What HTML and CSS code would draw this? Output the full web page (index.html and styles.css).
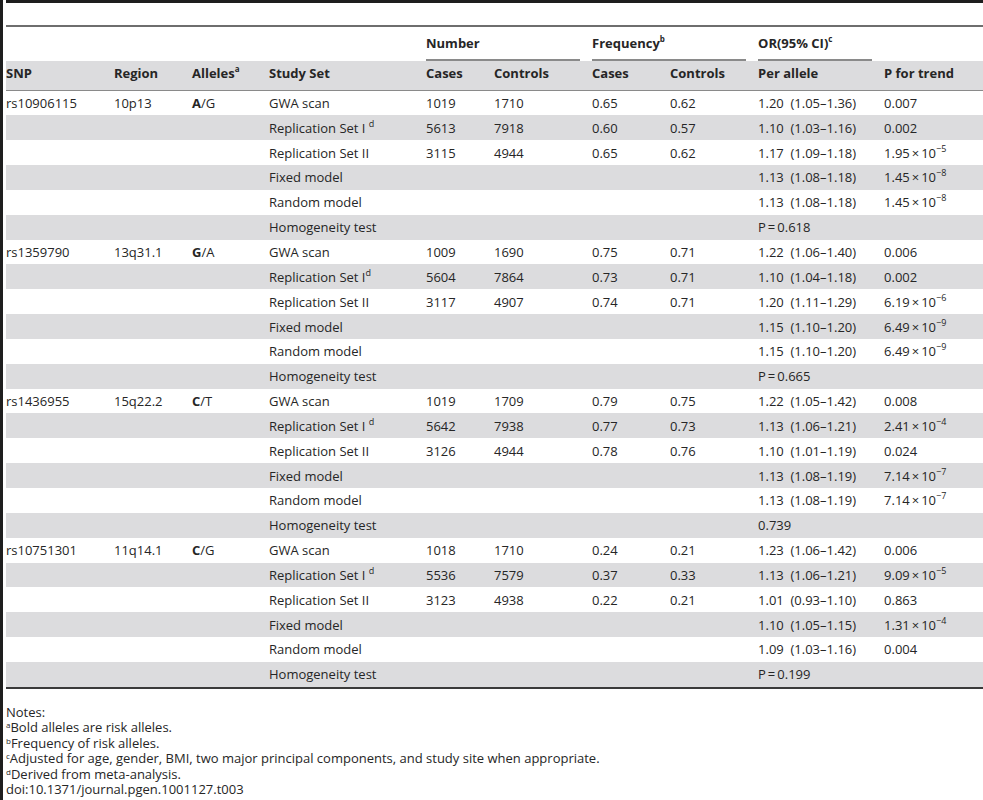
FILE: index.html
```html
<!DOCTYPE html>
<html>
<head>
<meta charset="utf-8">
<link rel="stylesheet" href="styles.css">
</head>
<body>
<div class="frame">
  <div class="topbar"></div>
  <table class="tbl">
    <colgroup>
      <col class="c1"><col class="c2"><col class="c3"><col class="c4"><col class="c5">
      <col class="c6"><col class="c7"><col class="c8"><col class="c9"><col class="c10">
    </colgroup>
    <thead>
      <tr class="group">
        <th></th><th></th><th></th><th></th>
        <th colspan="2"><div class="ul">Number</div></th>
        <th colspan="2"><div class="ul">Frequency<sup>b</sup></div></th>
        <th><div class="ul">OR(95% CI)<sup>c</sup></div></th>
        <th></th>
      </tr>
      <tr class="head">
        <th>SNP</th><th>Region</th><th>Alleles<sup>a</sup></th><th>Study Set</th>
        <th>Cases</th><th>Controls</th><th>Cases</th><th>Controls</th><th>Per allele</th><th>P for trend</th>
      </tr>
    </thead>
    <tbody>
      <tr><td>rs10906115</td><td>10p13</td><td><b>A</b>/G</td><td>GWA scan</td><td>1019</td><td>1710</td><td>0.65</td><td>0.62</td><td>1.20 &nbsp;(1.05–1.36)</td><td>0.007</td></tr>
      <tr><td></td><td></td><td></td><td>Replication Set I <sup>d</sup></td><td>5613</td><td>7918</td><td>0.60</td><td>0.57</td><td>1.10 &nbsp;(1.03–1.16)</td><td>0.002</td></tr>
      <tr><td></td><td></td><td></td><td>Replication Set II</td><td>3115</td><td>4944</td><td>0.65</td><td>0.62</td><td>1.17 &nbsp;(1.09–1.18)</td><td>1.95<span class="x">×</span>10<sup>−5</sup></td></tr>
      <tr><td></td><td></td><td></td><td>Fixed model</td><td></td><td></td><td></td><td></td><td>1.13 &nbsp;(1.08–1.18)</td><td>1.45<span class="x">×</span>10<sup>−8</sup></td></tr>
      <tr><td></td><td></td><td></td><td>Random model</td><td></td><td></td><td></td><td></td><td>1.13 &nbsp;(1.08–1.18)</td><td>1.45<span class="x">×</span>10<sup>−8</sup></td></tr>
      <tr><td></td><td></td><td></td><td>Homogeneity test</td><td></td><td></td><td></td><td></td><td>P<span class="x">=</span>0.618</td><td></td></tr>

      <tr><td>rs1359790</td><td>13q31.1</td><td><b>G</b>/A</td><td>GWA scan</td><td>1009</td><td>1690</td><td>0.75</td><td>0.71</td><td>1.22 &nbsp;(1.06–1.40)</td><td>0.006</td></tr>
      <tr><td></td><td></td><td></td><td>Replication Set I<sup>d</sup></td><td>5604</td><td>7864</td><td>0.73</td><td>0.71</td><td>1.10 &nbsp;(1.04–1.18)</td><td>0.002</td></tr>
      <tr><td></td><td></td><td></td><td>Replication Set II</td><td>3117</td><td>4907</td><td>0.74</td><td>0.71</td><td>1.20 &nbsp;(1.11–1.29)</td><td>6.19<span class="x">×</span>10<sup>−6</sup></td></tr>
      <tr><td></td><td></td><td></td><td>Fixed model</td><td></td><td></td><td></td><td></td><td>1.15 &nbsp;(1.10–1.20)</td><td>6.49<span class="x">×</span>10<sup>−9</sup></td></tr>
      <tr><td></td><td></td><td></td><td>Random model</td><td></td><td></td><td></td><td></td><td>1.15 &nbsp;(1.10–1.20)</td><td>6.49<span class="x">×</span>10<sup>−9</sup></td></tr>
      <tr><td></td><td></td><td></td><td>Homogeneity test</td><td></td><td></td><td></td><td></td><td>P<span class="x">=</span>0.665</td><td></td></tr>

      <tr><td>rs1436955</td><td>15q22.2</td><td><b>C</b>/T</td><td>GWA scan</td><td>1019</td><td>1709</td><td>0.79</td><td>0.75</td><td>1.22 &nbsp;(1.05–1.42)</td><td>0.008</td></tr>
      <tr><td></td><td></td><td></td><td>Replication Set I <sup>d</sup></td><td>5642</td><td>7938</td><td>0.77</td><td>0.73</td><td>1.13 &nbsp;(1.06–1.21)</td><td>2.41<span class="x">×</span>10<sup>−4</sup></td></tr>
      <tr><td></td><td></td><td></td><td>Replication Set II</td><td>3126</td><td>4944</td><td>0.78</td><td>0.76</td><td>1.10 &nbsp;(1.01–1.19)</td><td>0.024</td></tr>
      <tr><td></td><td></td><td></td><td>Fixed model</td><td></td><td></td><td></td><td></td><td>1.13 &nbsp;(1.08–1.19)</td><td>7.14<span class="x">×</span>10<sup>−7</sup></td></tr>
      <tr><td></td><td></td><td></td><td>Random model</td><td></td><td></td><td></td><td></td><td>1.13 &nbsp;(1.08–1.19)</td><td>7.14<span class="x">×</span>10<sup>−7</sup></td></tr>
      <tr><td></td><td></td><td></td><td>Homogeneity test</td><td></td><td></td><td></td><td></td><td>0.739</td><td></td></tr>

      <tr><td>rs10751301</td><td>11q14.1</td><td><b>C</b>/G</td><td>GWA scan</td><td>1018</td><td>1710</td><td>0.24</td><td>0.21</td><td>1.23 &nbsp;(1.06–1.42)</td><td>0.006</td></tr>
      <tr><td></td><td></td><td></td><td>Replication Set I <sup>d</sup></td><td>5536</td><td>7579</td><td>0.37</td><td>0.33</td><td>1.13 &nbsp;(1.06–1.21)</td><td>9.09<span class="x">×</span>10<sup>−5</sup></td></tr>
      <tr><td></td><td></td><td></td><td>Replication Set II</td><td>3123</td><td>4938</td><td>0.22</td><td>0.21</td><td>1.01 &nbsp;(0.93–1.10)</td><td>0.863</td></tr>
      <tr><td></td><td></td><td></td><td>Fixed model</td><td></td><td></td><td></td><td></td><td>1.10 &nbsp;(1.05–1.15)</td><td>1.31<span class="x">×</span>10<sup>−4</sup></td></tr>
      <tr><td></td><td></td><td></td><td>Random model</td><td></td><td></td><td></td><td></td><td>1.09 &nbsp;(1.03–1.16)</td><td>0.004</td></tr>
      <tr><td></td><td></td><td></td><td>Homogeneity test</td><td></td><td></td><td></td><td></td><td>P<span class="x">=</span>0.199</td><td></td></tr>
    </tbody>
  </table>
  <div class="notes">
    <div class="line">Notes:</div>
    <div class="line"><sup>a</sup>Bold alleles are risk alleles.</div>
    <div class="line"><sup>b</sup>Frequency of risk alleles.</div>
    <div class="line"><sup>c</sup>Adjusted for age, gender, BMI, two major principal components, and study site when appropriate.</div>
    <div class="line"><sup>d</sup>Derived from meta-analysis.</div>
    <div class="line">doi:10.1371/journal.pgen.1001127.t003</div>
  </div>
</div>
</body>
</html>
```
FILE: styles.css
```css
html, body {
  margin: 0;
  padding: 0;
  background: #fff;
}
body {
  font-family: "Open Sans", "Liberation Sans", sans-serif;
  font-size: 13px;
  color: #262626;
}
.frame {
  border-left: 3px solid #1e1e1e;
  padding-left: 3px;
  min-height: 800px;
  box-sizing: border-box;
}
.topbar {
  height: 3px;
  background: #1e1e1e;
  margin-bottom: 22px;
}
.tbl {
  width: 977px;
  table-layout: fixed;
  border-collapse: collapse;
  border-top: 2px solid #6e6e6e;
  border-bottom: 2px solid #3a3a3a;
}
.c1 { width: 108px; }
.c2 { width: 78px; }
.c3 { width: 77px; }
.c4 { width: 157px; }
.c5 { width: 68px; }
.c6 { width: 98px; }
.c7 { width: 78px; }
.c8 { width: 88px; }
.c9 { width: 126px; }
.c10 { width: 99px; }
th, td {
  text-align: left;
  padding: 0 12px 0 0;
  white-space: nowrap;
  vertical-align: middle;
}
th {
  font-weight: 700;
}
.group th {
  height: 34px;
  vertical-align: bottom;
}
.group .ul {
  border-bottom: 2px solid #8a8a8a;
  padding: 0 0 7px;
}
.head th {
  height: 29px;
  padding-bottom: 4px;
  box-sizing: border-box;
  background: #dcdcde;
  border-bottom: 1px solid #8a8a8a;
}
tbody td {
  height: 24.85px;
}
tbody tr:nth-child(even) td {
  background: #dcdcde;
}
sup {
  font-size: 9px;
  line-height: 0;
  vertical-align: 6px;
}
th sup {
  font-weight: 700;
  font-size: 8px;
}
.x {
  margin: 0 2px;
}
b {
  font-weight: 700;
}
.notes {
  padding-top: 16px;
  line-height: 15.5px;
}
.notes sup {
  font-size: 8px;
  vertical-align: 4px;
}
```
